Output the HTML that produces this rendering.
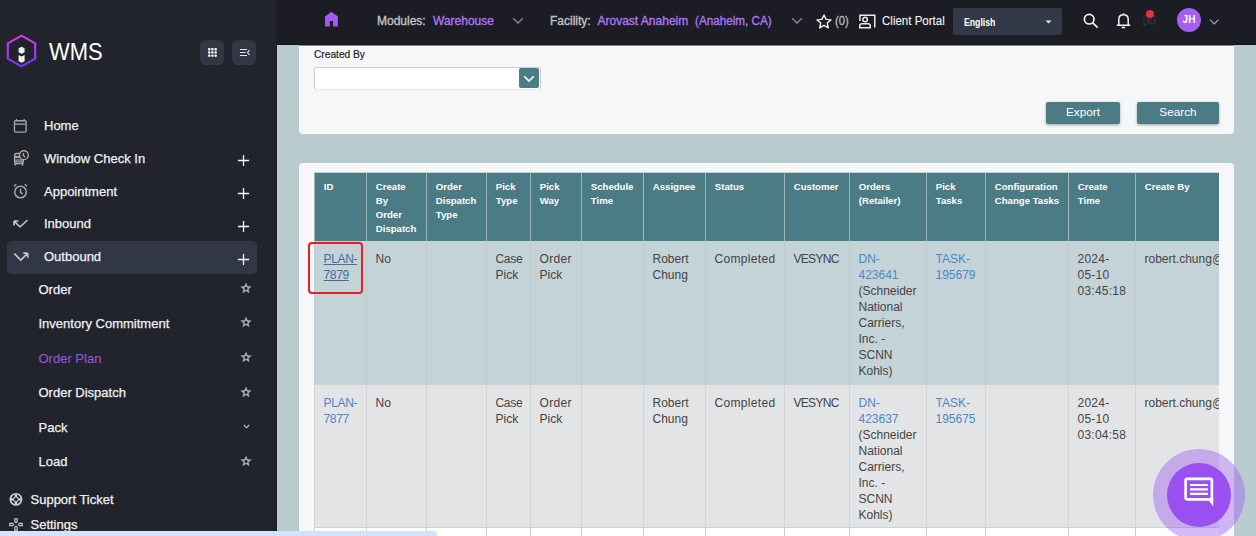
<!DOCTYPE html>
<html><head><meta charset="utf-8">
<style>
*{box-sizing:border-box;margin:0;padding:0}
html,body{width:1256px;height:536px;overflow:hidden;background:#b8cbcf;font-family:"Liberation Sans",sans-serif;position:relative}
.abs{position:absolute}
#side{position:absolute;left:0;top:0;width:277px;height:536px;background:#21242c;border-right:1px solid #1b1d23}
#top{position:absolute;left:277px;top:0;width:979px;height:45px;background:#1b1c24;z-index:5;border-bottom:1px solid #141419}
.t{position:absolute;white-space:nowrap;line-height:16px}
.mi{font-size:13px;color:#f0f0f0;-webkit-text-stroke:0.25px #f0f0f0}
.tb{font-size:12px;z-index:6;-webkit-text-stroke:0.35px currentColor}
.card{position:absolute;background:#f6f7f9;border-radius:4px}
.btn{position:absolute;background:#4b7c85;color:#fff;font-size:11.8px;text-align:center;line-height:20.5px;border-radius:2px;box-shadow:0 1px 3px rgba(0,0,0,.35)}
#tw{position:absolute;left:313px;top:172px;width:906px;height:370px;overflow:hidden}
table{border-collapse:separate;border-spacing:0;table-layout:fixed;position:absolute;left:1px;top:0;width:941px}
th{background:#4b7b85;color:#fff;font-size:9.6px;font-weight:bold;text-align:left;vertical-align:top;line-height:13.73px;padding:7.3px 4px 0 8.8px;border-left:1px solid #9fb6ba;height:69px;border-top:1px solid #c9ced0}
td{font-size:12px;color:#444;vertical-align:top;line-height:16.07px;padding:10px 4px 0 8.5px;border-left:1px solid #cdd0d1;border-bottom:1px solid #cfd1d2}
tr.r1 td{background:#c3d3d8;height:144px;border-left-color:#bdcbcf}
tr.r2 td{background:#e3e4e6;height:143px;border-left-color:#d3d4d6}
tr.r3 td{background:#fff;height:40px}
a{color:#4a88c8;text-decoration:none}
</style></head><body>

<!-- SIDEBAR -->
<div id="side">
  <div class="abs" style="left:7px;top:241px;width:250px;height:33px;background:#323746;border-radius:5px"></div>
  <svg class="abs" style="left:6px;top:34px" width="32" height="34" viewBox="0 0 32 34">
    <defs><linearGradient id="lg" x1="0" y1="0" x2="0" y2="1"><stop offset="0" stop-color="#e035e8"/><stop offset="1" stop-color="#6e3bf2"/></linearGradient></defs>
    <path d="M15.5 1.6 L29.2 9.4 V24.6 L15.5 32.4 L1.8 24.6 V9.4 Z" fill="none" stroke="url(#lg)" stroke-width="2.2" stroke-linejoin="round"/>
    <path d="M15.6 12.8 L18.6 14.3 V18.2 L15.6 19.9 L12.6 18.2 V14.3 Z" fill="#ededed"/>
    <path d="M12.6 20.9 L15.6 22.4 L18.6 20.9 V27.3 L15.6 28.8 L12.6 27.3 Z" fill="#f2f2f2"/>
  </svg>
  <div class="t" style="left:48.5px;top:38.5px;font-size:23px;line-height:26px;color:#fff;transform:scaleX(.955);transform-origin:0 0">WMS</div>
  <div class="abs" style="left:200px;top:40px;width:24px;height:25px;background:#323746;border-radius:6px"></div>
  <svg class="abs" style="left:207px;top:47px" width="11" height="11" viewBox="0 0 11 11" fill="#fff"><rect x="1.1" y="1.1" width="2.3" height="2.3" rx="0.6"/><rect x="4.3" y="1.1" width="2.3" height="2.3" rx="0.6"/><rect x="7.5" y="1.1" width="2.3" height="2.3" rx="0.6"/><rect x="1.1" y="4.3" width="2.3" height="2.3" rx="0.6"/><rect x="4.3" y="4.3" width="2.3" height="2.3" rx="0.6"/><rect x="7.5" y="4.3" width="2.3" height="2.3" rx="0.6"/><rect x="1.1" y="7.5" width="2.3" height="2.3" rx="0.6"/><rect x="4.3" y="7.5" width="2.3" height="2.3" rx="0.6"/><rect x="7.5" y="7.5" width="2.3" height="2.3" rx="0.6"/></svg>
  <div class="abs" style="left:232px;top:40px;width:24px;height:25px;background:#323746;border-radius:6px"></div>
  <svg class="abs" style="left:239px;top:48px" width="12" height="9" viewBox="0 0 12 9" stroke="#e6e6e6" stroke-width="1.2" fill="none">
    <path d="M1 1.5H8M1 4.5H6.5M1 7.5H8M10.5 2L8.5 4.5L10.5 7"/>
  </svg>

  <!-- menu icons -->
  <svg class="abs" style="left:13px;top:118px" width="15" height="16" viewBox="0 0 15 16" fill="none" stroke="#a6a6a6" stroke-width="1.35"><rect x="1.45" y="2.75" width="11.7" height="11.4" rx="1.3"/><path d="M1.45 6.1H13.15M3.5 0.9V2.8M11.2 0.9V2.8"/></svg>
  <svg class="abs" style="left:10px;top:146px" width="22" height="24" viewBox="0 0 22 24" fill="none" stroke="#a8a8a8" stroke-width="1.4"><rect x="4.6" y="7.5" width="8.7" height="10" rx="2"/><path d="M4.6 11H10M5.3 17.5V19.6M12.6 17.5V19.6" stroke-width="1.8"/><rect x="6" y="14" width="5.9" height="1.8" stroke-width="1.1"/><circle cx="13.9" cy="9.2" r="4.4" fill="#21242c"/><path d="M13.4 6.9V9.7L15.3 11"/></svg>
  <svg class="abs" style="left:13px;top:183px" width="16" height="16" viewBox="0 0 16 16" fill="none" stroke="#a6a6a6" stroke-width="1.5">
    <circle cx="7.5" cy="9" r="5.8"/><path d="M7.5 5.8V9.3L9.8 11M1 3.2L3.3 1.2M14 3.2L11.7 1.2"/>
  </svg>
  <svg class="abs" style="left:12px;top:219px" width="18" height="11" viewBox="0 0 18 11" fill="none" stroke="#c4c4c4" stroke-width="1.7">
    <path d="M2 2L8 8M2 2V6.5M2 2H6.5M8 8L15.5 1"/>
  </svg>
  <svg class="abs" style="left:12px;top:251px" width="19" height="12" viewBox="0 0 19 12" fill="none" stroke="#c4c4c4" stroke-width="1.7">
    <path d="M2.3 2.6L8.8 9L15.8 2.2M15.8 2.2H11.2M15.8 2.2V6.8"/>
  </svg>


<svg class="abs" style="left:237px;top:154px" width="13" height="13" viewBox="0 0 13 13" stroke="#f8f8f8" stroke-width="1.3"><path d="M6.5 0.9V12.1M0.9 6.5H12.1"/></svg>
<svg class="abs" style="left:237px;top:187px" width="13" height="13" viewBox="0 0 13 13" stroke="#f8f8f8" stroke-width="1.3"><path d="M6.5 0.9V12.1M0.9 6.5H12.1"/></svg>
<svg class="abs" style="left:237px;top:220px" width="13" height="13" viewBox="0 0 13 13" stroke="#f8f8f8" stroke-width="1.3"><path d="M6.5 0.9V12.1M0.9 6.5H12.1"/></svg>
<svg class="abs" style="left:237px;top:253px" width="13" height="13" viewBox="0 0 13 13" stroke="#f8f8f8" stroke-width="1.3"><path d="M6.5 0.9V12.1M0.9 6.5H12.1"/></svg>
<svg class="abs" style="left:240px;top:282.3px" width="12" height="12" viewBox="0 0 12 12"><path d="M6.00 0.40 L7.59 4.22 L11.71 4.55 L8.57 7.23 L9.53 11.25 L6.00 9.10 L2.47 11.25 L3.43 7.23 L0.29 4.55 L4.41 4.22ZM7.03 4.98 L7.66 6.94 L6.00 8.15 L4.34 6.94 L4.97 4.98Z" fill="#a3acc0" fill-rule="evenodd"/></svg>
<svg class="abs" style="left:240px;top:316.4px" width="12" height="12" viewBox="0 0 12 12"><path d="M6.00 0.40 L7.59 4.22 L11.71 4.55 L8.57 7.23 L9.53 11.25 L6.00 9.10 L2.47 11.25 L3.43 7.23 L0.29 4.55 L4.41 4.22ZM7.03 4.98 L7.66 6.94 L6.00 8.15 L4.34 6.94 L4.97 4.98Z" fill="#a3acc0" fill-rule="evenodd"/></svg>
<svg class="abs" style="left:240px;top:351.4px" width="12" height="12" viewBox="0 0 12 12"><path d="M6.00 0.40 L7.59 4.22 L11.71 4.55 L8.57 7.23 L9.53 11.25 L6.00 9.10 L2.47 11.25 L3.43 7.23 L0.29 4.55 L4.41 4.22ZM7.03 4.98 L7.66 6.94 L6.00 8.15 L4.34 6.94 L4.97 4.98Z" fill="#a3acc0" fill-rule="evenodd"/></svg>
<svg class="abs" style="left:240px;top:385.9px" width="12" height="12" viewBox="0 0 12 12"><path d="M6.00 0.40 L7.59 4.22 L11.71 4.55 L8.57 7.23 L9.53 11.25 L6.00 9.10 L2.47 11.25 L3.43 7.23 L0.29 4.55 L4.41 4.22ZM7.03 4.98 L7.66 6.94 L6.00 8.15 L4.34 6.94 L4.97 4.98Z" fill="#a3acc0" fill-rule="evenodd"/></svg>
<svg class="abs" style="left:240px;top:454.9px" width="12" height="12" viewBox="0 0 12 12"><path d="M6.00 0.40 L7.59 4.22 L11.71 4.55 L8.57 7.23 L9.53 11.25 L6.00 9.10 L2.47 11.25 L3.43 7.23 L0.29 4.55 L4.41 4.22ZM7.03 4.98 L7.66 6.94 L6.00 8.15 L4.34 6.94 L4.97 4.98Z" fill="#a3acc0" fill-rule="evenodd"/></svg>
<svg class="abs" style="left:243px;top:424px" width="7" height="5" viewBox="0 0 7 5" fill="none" stroke="#b8c0d4" stroke-width="1.1"><path d="M0.8 1L3.5 3.8L6.2 1"/></svg>
<svg class="abs" style="left:6px;top:490px" width="20" height="20" viewBox="0 0 20 20"><circle cx="9.95" cy="9.35" r="6.4" fill="#d0d0d0"/><circle cx="9.95" cy="9.35" r="3.75" fill="none" stroke="#21242c" stroke-width="2.1"/><path d="M9.95 4.2V14.5M4.8 9.35H15.1" stroke="#d0d0d0" stroke-width="2.4"/><circle cx="9.95" cy="9.35" r="2.6" fill="#d0d0d0"/><circle cx="9.95" cy="9.35" r="1.85" fill="#21242c"/></svg>
<svg class="abs" style="left:9px;top:518px" width="14" height="13" viewBox="0 0 14 13" fill="none" stroke="#c8c8c8" stroke-width="1.2"><path d="M5.8 0.8H8.2V3.6L7 4.6L5.8 3.6Z M5.8 12.2H8.2V9.4L7 8.4L5.8 9.4Z M0.8 5.3V7.7H3.6L4.6 6.5L3.6 5.3Z M13.2 5.3V7.7H10.4L9.4 6.5L10.4 5.3Z"/></svg>
  <div class="t mi" style="left:44px;top:117.5px">Home</div>
  <div class="t mi" style="left:44px;top:150.5px">Window Check In</div>
  <div class="t mi" style="left:44px;top:183.5px">Appointment</div>
  <div class="t mi" style="left:44px;top:216px">Inbound</div>
  <div class="t mi" style="left:44px;top:249px">Outbound</div>
  <div class="t mi" style="left:38.5px;top:281.5px">Order</div>
  <div class="t mi" style="left:38.5px;top:315.5px">Inventory Commitment</div>
  <div class="t mi" style="left:38.5px;top:350.5px;color:#9c52de;-webkit-text-stroke:0.1px #9c52de">Order Plan</div>
  <div class="t mi" style="left:38.5px;top:385px">Order Dispatch</div>
  <div class="t mi" style="left:38.5px;top:419.5px">Pack</div>
  <div class="t mi" style="left:38.5px;top:454px">Load</div>
  <div class="t mi" style="left:30.5px;top:491.5px">Support Ticket</div>
  <div class="t mi" style="left:30.5px;top:516.5px">Settings</div>
</div>

<!-- TOPBAR -->
<div id="top"></div>
<svg class="abs" style="left:324px;top:11px;z-index:6" width="15" height="17" viewBox="0 0 15 17"><path d="M7.45 0.8L13.9 5.6V15.6H9.05V10H5.85V15.6H1V5.6Z" fill="#a05af5"/></svg>
<div class="t tb" style="left:377px;top:12.5px;color:#c4c4c4">Modules:</div>
<div class="t tb" style="left:433px;top:12.5px;color:#ab76f6">Warehouse</div>
<svg class="abs" style="left:512px;top:17px;z-index:6" width="12" height="8" viewBox="0 0 12 8" fill="none" stroke="#7b7e86" stroke-width="1.6"><path d="M1.2 1.2L6 6L10.8 1.2"/></svg>
<div class="t tb" style="left:550px;top:12.5px;color:#c4c4c4">Facility:</div>
<div class="t tb" style="left:597.5px;top:12.5px;color:#ab76f6">Arovast Anaheim</div>
<div class="t tb" style="left:695px;top:12.5px;color:#ab76f6;transform:scaleX(.975);transform-origin:0 0">(Anaheim, CA)</div>
<svg class="abs" style="left:791px;top:17px;z-index:6" width="12" height="8" viewBox="0 0 12 8" fill="none" stroke="#7b7e86" stroke-width="1.6"><path d="M1.2 1.2L6 6L10.8 1.2"/></svg>
<svg class="abs" style="left:816px;top:14px;z-index:6" width="16" height="15" viewBox="0 0 16 15" fill="none" stroke="#f2f2f2" stroke-width="1.4" stroke-linejoin="round"><path d="M8 1L10.1 5.4L14.9 5.9L11.3 9.1L12.3 13.9L8 11.4L3.7 13.9L4.7 9.1L1.1 5.9L5.9 5.4Z"/></svg>
<div class="t tb" style="left:835px;top:12.5px;color:#bdbdbd;-webkit-text-stroke:0.3px #bdbdbd;transform:scaleX(.93);transform-origin:0 0">(0)</div>
<svg class="abs" style="left:858px;top:13px;z-index:6" width="19" height="17" viewBox="0 0 19 17" fill="none" stroke="#ececec" stroke-width="1.5"><path d="M1.95 8.1V2.15H16.75V14.5"/><circle cx="7.1" cy="6.5" r="2.3"/><path d="M1.75 14.65V12.8Q1.75 10.85 4 10.85H10Q12.25 10.85 12.25 12.8V14.65Z"/></svg>
<div class="t tb" style="left:882px;top:12.5px;color:#f4f4f4;-webkit-text-stroke:0.1px #f4f4f4;transform:scaleX(.96);transform-origin:0 0">Client Portal</div>
<div class="abs" style="left:953px;top:8px;width:109px;height:27px;background:#333847;border-radius:2px;z-index:6"></div>
<div class="t" style="left:964px;top:15px;z-index:7;color:#fff;font-size:10px;font-weight:bold;transform:scaleX(.87);transform-origin:0 0">English</div>
<svg class="abs" style="left:1045px;top:20px;z-index:7" width="7" height="4" viewBox="0 0 7 4"><path d="M0.5 0.5H6.5L3.5 3.5Z" fill="#e8e8e8"/></svg>
<svg class="abs" style="left:1083px;top:13px;z-index:6" width="16" height="16" viewBox="0 0 16 16" fill="none" stroke="#f4f4f4" stroke-width="1.7"><circle cx="6.2" cy="6.2" r="4.8"/><path d="M9.8 9.8L14.6 14.6"/></svg>
<svg class="abs" style="left:1116px;top:12px;z-index:6" width="15" height="17" viewBox="0 0 15 17" fill="none" stroke="#f4f4f4" stroke-width="1.5"><path d="M7.5 1.2V2.5M2.8 12.8V7.5Q2.8 2.8 7.5 2.8Q12.2 2.8 12.2 7.5V12.8M0.8 13.2H14.2M5.8 15.6H9.2"/></svg>
<svg class="abs" style="left:1143px;top:15px;z-index:6" width="13" height="12" viewBox="0 0 13 12" fill="none" stroke="#2e3036" stroke-width="1.3"><path d="M1 1H12V8.5H4L1 11Z"/><path d="M3.5 4H9.5M3.5 6H8"/></svg>
<div class="abs" style="left:1146px;top:10px;width:8.4px;height:8.4px;border-radius:50%;background:#e3333b;z-index:7"></div>
<div class="abs" style="left:1177px;top:8px;width:24px;height:24px;border-radius:50%;background:#a45ef2;z-index:6"></div>
<div class="t" style="left:1177px;top:12px;width:24px;text-align:center;z-index:7;color:#fff;font-size:10px;font-weight:bold">JH</div>
<svg class="abs" style="left:1209px;top:18px;z-index:6" width="11" height="8" viewBox="0 0 11 8" fill="none" stroke="#a3a8b2" stroke-width="1.2"><path d="M1 1.6L5.2 6L9.4 1.6"/></svg>

<!-- CONTENT -->
<div class="card" style="left:299px;top:20px;width:935px;height:114px"></div>
<div class="abs" style="left:299px;top:45px;width:935px;height:1px;background:#8c8d90;z-index:4"></div>
<div class="abs" style="left:299px;top:46px;width:935px;height:1px;background:#fff;z-index:4"></div>
<div class="card" style="left:299px;top:163px;width:935px;height:400px"></div>
<div class="t" style="left:314px;top:47.5px;font-size:10.2px;color:#262626;line-height:14px;-webkit-text-stroke:0.2px #262626">Created By</div>
<div class="abs" style="left:314px;top:67px;width:227px;height:23px;background:#fff;border:1px solid #cdcdcd;border-bottom-color:#e8e8e8;border-radius:3px"></div>
<div class="abs" style="left:519px;top:68px;width:19.5px;height:20px;background:#4a7d87;border-radius:2px"></div>
<svg class="abs" style="left:523px;top:74.5px" width="12" height="8" viewBox="0 0 12 8" fill="none" stroke="#fff" stroke-width="1.6"><path d="M1.2 1.2L6 6L10.8 1.2"/></svg>
<div class="btn" style="left:1046px;top:102px;width:74px;height:22px">Export</div>
<div class="btn" style="left:1137px;top:102px;width:82px;height:22px">Search</div>

<div id="tw">
<table>
<colgroup><col style="width:52px"><col style="width:60px"><col style="width:60px"><col style="width:44px"><col style="width:51px"><col style="width:62px"><col style="width:62px"><col style="width:79px"><col style="width:65px"><col style="width:77px"><col style="width:59px"><col style="width:83px"><col style="width:67px"><col style="width:120px"></colgroup>
<tr><th>ID</th><th>Create<br>By<br>Order<br>Dispatch</th><th>Order<br>Dispatch<br>Type</th><th>Pick<br>Type</th><th>Pick<br>Way</th><th>Schedule<br>Time</th><th>Assignee</th><th>Status</th><th>Customer</th><th>Orders<br>(Retailer)</th><th>Pick<br>Tasks</th><th>Configuration<br>Change Tasks</th><th>Create<br>Time</th><th>Create By</th></tr>
<tr class="r1"><td><a style="color:#42709f;text-decoration:underline;letter-spacing:-0.35px">PLAN-<br>7879</a></td><td>No</td><td></td><td><span style="letter-spacing:-0.3px">Case</span><br>Pick</td><td><span style="letter-spacing:0.3px">Order</span><br>Pick</td><td></td><td>Robert<br>Chung</td><td style="letter-spacing:0.33px">Completed</td><td style="letter-spacing:-0.7px">VESYNC</td><td><a>DN-<br>423641</a><br>(Schneider<br>National<br>Carriers,<br>Inc. -<br>SCNN<br>Kohls)</td><td><a>TASK-<br>195679</a></td><td></td><td style="letter-spacing:0.25px">2024-<br>05-10<br>03:45:18</td><td>robert.chung@</td></tr>
<tr class="r2"><td><a style="letter-spacing:-0.35px">PLAN-<br>7877</a></td><td>No</td><td></td><td><span style="letter-spacing:-0.3px">Case</span><br>Pick</td><td><span style="letter-spacing:0.3px">Order</span><br>Pick</td><td></td><td>Robert<br>Chung</td><td style="letter-spacing:0.33px">Completed</td><td style="letter-spacing:-0.7px">VESYNC</td><td><a>DN-<br>423637</a><br>(Schneider<br>National<br>Carriers,<br>Inc. -<br>SCNN<br>Kohls)</td><td><a>TASK-<br>195675</a></td><td></td><td style="letter-spacing:0.25px">2024-<br>05-10<br>03:04:58</td><td>robert.chung@</td></tr>
<tr class="r3"><td></td><td></td><td></td><td></td><td></td><td></td><td></td><td></td><td></td><td></td><td></td><td></td><td></td><td></td></tr>
</table>
</div>

<!-- red highlight -->
<div class="abs" style="left:308px;top:242px;width:55px;height:52px;border:2px solid #ec1c22;border-radius:4px"></div>

<!-- chat -->
<div class="abs" style="left:1153px;top:449px;width:92px;height:92px;border-radius:50%;background:rgba(155,90,240,.42)"></div>
<div class="abs" style="left:1167px;top:463px;width:64px;height:64px;border-radius:50%;background:#9a50f0"></div>
<svg class="abs" style="left:1184px;top:477px" width="30" height="30" viewBox="0 0 30 30" fill="none" stroke="#fff"><path d="M1.6 3.6Q1.6 1.9 3.3 1.9H26.2Q27.9 1.9 27.9 3.6V22.4H3.3Q1.6 22.4 1.6 20.7Z" stroke-width="2.6"/><path d="M22.8 21.1H29.2V29.3Z" fill="#fff" stroke="none"/><path d="M6 8H23.8M6 12.4H23.8M6 16.8H23.8" stroke-width="2.2"/></svg>

<div class="abs" style="left:0;top:531px;width:437px;height:5px;background:#d3e3fb;border-top-right-radius:4px;z-index:9"></div>
</body></html>
